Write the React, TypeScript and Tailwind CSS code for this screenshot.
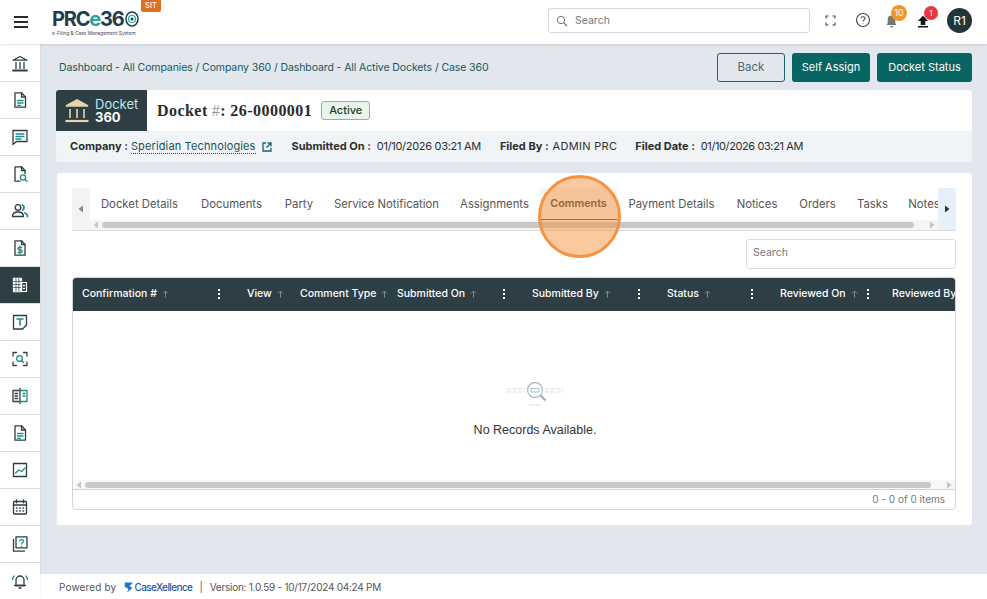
import React from "react";

const D = "#2d3e44";
const T = "#1c8f86";

function Ic({ children, size = 20 }: { children: React.ReactNode; size?: number }) {
  return (
    <svg width={size} height={size} viewBox="0 0 20 20" fill="none" stroke={D} strokeWidth="1.3" strokeLinecap="round" strokeLinejoin="round">
      {children}
    </svg>
  );
}

const sideIcons: React.ReactNode[] = [
  <Ic><path d="M3 7.2 10 3.5l7 3.7H3Z" /><path d="M6 9.5v6M10 9.5v6M14 9.5v6" /><path d="M3 17.5h14" strokeWidth="1.8" /></Ic>,
  <Ic><path d="M5 2.8h6.5L15.5 7v10.2H5Z" /><path d="M11.5 2.8V7h4" /><path d="M7.5 10.5h5.5M7.5 13h5.5" stroke={T} /><path d="M7.5 15.3h3" stroke={T} /></Ic>,
  <Ic><path d="M3 3.5h14v11H6.5L3 17.5Z" /><path d="M6 7h8M6 9.5h8M6 12h5" stroke={T} /></Ic>,
  <Ic><path d="M11.5 2.8H5v14.4h5" /><path d="M11.5 2.8 15 6.5v3" /><path d="M11.5 2.8v3.7H15" /><circle cx="13" cy="13.5" r="2.6" stroke={T} /><path d="m15 15.5 2 2" stroke={T} /></Ic>,
  <Ic><circle cx="8" cy="6.5" r="2.8" /><path d="M2.5 15.5c0-3 2.5-4.5 5.5-4.5s5.5 1.500 5.500 4.500Z" /><path d="M12.500 4c2 .8 2 4.200 0 5" stroke={T} strokeWidth="1.8" /><path d="M15 12c1.500.6 2.300 1.800 2.500 3.500" stroke={T} strokeWidth="1.8" /></Ic>,
  <Ic><path d="M5 2.800h6.500L15 6.500v10.700H5Z" /><path d="M11.500 2.800v3.700H15" /><path d="M11.800 9.300H9.200a1.300 1.300 0 0 0 0 2.600h1.600a1.300 1.300 0 0 1 0 2.600H8M10 8.200v7.400" stroke={T} /></Ic>,
  <Ic><rect x="3.500" y="3.500" width="8" height="13" fill="#fff" stroke="#fff" /><path d="M3.500 6.500h8M3.500 9.500h8M3.500 12.500h8M6 3.500v13M8.800 3.500v13" stroke={D} strokeWidth="0.700" /><path d="M11.500 7.500h5v9h-5Z" stroke="#fff" strokeWidth="1.200" /><path d="M13.500 10.500h1M13.500 13.500h1" stroke="#fff" /></Ic>,
  <Ic><path d="M3.500 3.500h13v9.500l-4 4h-9Z" /><path d="M7 7h6M10 7v6" stroke={T} strokeWidth="1.600" /></Ic>,
  <Ic><path d="M3 7V3.500h3.500M13.500 3.500H17V7M17 13v3.500h-3.500M6.500 16.500H3V13" /><circle cx="9.500" cy="9.500" r="2.800" stroke={T} /><path d="m11.500 11.500 2 2" stroke={T} /></Ic>,
  <Ic><path d="M9 4.500H3v11h6" /><path d="M11 4.500h6v11h-6" stroke={T} /><path d="M10 2.500v15" /><path d="M5 7.500h2.500M5 10h2.500M5 12.500h2.500" /><path d="M13 7.500h2M13 10h2" stroke={T} /></Ic>,
  <Ic><path d="M5 2.800h6.500L15.500 7v10.200H5Z" /><path d="M11.500 2.800V7h4" /><path d="M7.500 10.500h5.500M7.500 13h5.500M7.500 15.300h3" stroke={T} /></Ic>,
  <Ic><rect x="3.500" y="3.500" width="13" height="13" /><path d="m5.500 13 3.500-3 2.500 1.500 3.500-3.500" stroke={T} /></Ic>,
  <Ic><rect x="3.500" y="4.500" width="13" height="12.500" rx="1" /><path d="M3.500 8h13M6.500 2.800v3M13.500 2.800v3" /><path d="M6.500 11h.5M9.800 11h.5M13 11h.5M6.500 14h.5M9.800 14h.5M13 14h.5" strokeWidth="1.500" /></Ic>,
  <Ic><path d="M6 2.800h11v11H6Z" /><path d="M3.500 5.500v11.700h11" /><path d="M9.800 6.800c.3-1.600 3.700-1.600 3.700.4 0 1.500-2 1.500-2 3" stroke={T} /><path d="M11.500 12.300v.1" stroke={T} /></Ic>,
  <Ic><path d="M6 14.500V9a4 4 0 0 1 8 0v5.500Z" /><path d="M4.500 14.500h11M9 17h2" /><path d="M4 5c-1 1-1.500 2-1.500 3.500M16 5c1 1 1.500 2 1.500 3.500" stroke={T} /></Ic>,
];

const tabs = [
  ["Docket Details", "w-[99px]"],
  ["Documents", "w-[85px]"],
  ["Party", "w-[50px]"],
  ["Service Notification", "w-[125px]"],
  ["Assignments", "w-[91px]"],
  ["Comments", "w-[77px]"],
  ["Payment Details", "w-[109px]"],
  ["Notices", "w-[62px]"],
  ["Orders", "w-[59px]"],
  ["Tasks", "w-[51px]"],
  ["Notes", "w-[52px]"],
];

const cols: { label: string; w: string; kebab: boolean; pad: string }[] = [
  { label: "Confirmation #", w: "w-[164px]", kebab: true, pad: "pl-[9px] pr-[10px]" },
  { label: "View", w: "w-[53px]", kebab: false, pad: "px-[10px]" },
  { label: "Comment Type", w: "w-[97px]", kebab: false, pad: "px-[10px]" },
  { label: "Submitted On", w: "w-[135px]", kebab: true, pad: "px-[10px]" },
  { label: "Submitted By", w: "w-[135px]", kebab: true, pad: "px-[10px]" },
  { label: "Status", w: "w-[113px]", kebab: true, pad: "px-[10px]" },
  { label: "Reviewed On", w: "w-[112px]", kebab: true, pad: "pl-[10px] pr-[6px]" },
  { label: "Reviewed By", w: "w-[80px]", kebab: false, pad: "px-[10px]" },
];

function Kebab() {
  return (
    <span className="ml-auto flex w-4 flex-col items-center gap-[2px]">
      <span className="h-[2px] w-[2px] bg-white" />
      <span className="h-[2px] w-[2px] bg-white" />
      <span className="h-[2px] w-[2px] bg-white" />
    </span>
  );
}

function Arrow({ dir, color }: { dir: "l" | "r"; color: string }) {
  return (
    <svg width="6" height="8" viewBox="0 0 6 8" fill={color}>
      {dir === "l" ? <path d="M5 0.500v7L0.500 4Z" /> : <path d="M1 0.500v7L5.500 4Z" />}
    </svg>
  );
}

export default function App() {
  const sans = "font-['Inter',sans-serif]";
  return (
    <div className={`relative flex h-[599px] w-[987px] flex-col overflow-hidden bg-[#e2e7ed] text-[#333] ${sans}`}>
      {/* Top bar */}
      <header className="relative z-10 flex h-[44px] shrink-0 items-center bg-white pl-[14px] pr-[15px] shadow-[0_1px_2px_rgba(0,0,0,0.12)]">
        <div className="flex w-[14px] flex-col gap-[3px]">
          <span className="h-[2px] bg-[#2b2b2b]" />
          <span className="h-[2px] bg-[#2b2b2b]" />
          <span className="h-[2px] bg-[#2b2b2b]" />
        </div>
        <div className="ml-[25px] flex w-[88px] flex-col">
          <div className="-ml-[1px] flex h-[22px] items-center text-[20px] font-bold leading-[22px] tracking-[-1.200px] text-[#1f3d4a]">
            <span>PRC</span>
            <span className="text-[#2aa198]">e</span>
            <span>36</span>
            <svg className="ml-[1px]" width="14" height="16" viewBox="0 0 14 16" fill="none">
              <ellipse cx="7" cy="8" rx="6" ry="7" stroke="#1f3d4a" strokeWidth="1.500" />
              <circle cx="7" cy="8" r="3.500" stroke="#2aa198" strokeWidth="1.200" />
              <circle cx="7" cy="8" r="1.500" fill="#1f3d4a" />
            </svg>
          </div>
          <span className="-ml-[1px] whitespace-nowrap text-[4.800px] leading-[6px] text-[#445]">e-Filing &amp; Case Management System</span>
        </div>
        <div className="mb-[32px] flex h-[12px] w-[20px] items-center justify-center rounded-b-[2px] bg-[#e0701f] text-[7.500px] font-medium text-white">SIT</div>
        <div className="mb-[3px] ml-[387px] flex h-[25px] w-[262px] items-center rounded-[3px] border border-[#d5d7da] pl-[7px]">
          <svg width="12" height="12" viewBox="0 0 12 12" fill="none" stroke="#777" strokeWidth="1"><circle cx="5" cy="5" r="3.700" /><path d="m8 8 3 3" strokeWidth="1.400" /></svg>
          <span className="ml-[7px] text-[10.500px] text-[#777]">Search</span>
        </div>
        <svg className="mb-[4px] ml-[15px]" width="11" height="11" viewBox="0 0 11 11" fill="none" stroke="#444" strokeWidth="1.100"><path d="M1 3.500V1h2.500M7.500 1H10v2.500M10 7.500V10H7.500M3.500 10H1V7.500" /></svg>
        <svg className="mb-[4px] ml-[19px]" width="16" height="16" viewBox="0 0 16 16" fill="none" stroke="#444" strokeWidth="1.100"><circle cx="8" cy="8" r="6.500" /><path d="M6 6.300c.2-2 4-2 4 .1 0 1.500-2 1.400-2 3" /><path d="M8 11.200v.5" /></svg>
        <div className="relative mb-[4px] ml-[12px] h-[16px] w-[16px]">
          <svg className="absolute left-[3px] top-[3px]" width="11" height="13" viewBox="0 0 11 13" fill="#777"><path d="M5.500 0.500a3.800 3.800 0 0 0-3.800 3.800V8L0.500 10h10L9.300 8V4.300A3.800 3.800 0 0 0 5.500 0.500ZM4 11h3a1.500 1.500 0 0 1-3 0Z" /></svg>
          <span className="absolute left-[8px] top-[-7px] flex h-[16px] w-[16px] items-center justify-center rounded-full bg-[#f0962b] text-[9px] text-white">10</span>
        </div>
        <div className="relative mb-[4px] ml-[16px] h-[16px] w-[16px]">
          <svg className="absolute left-[2px] top-[3px]" width="12" height="13" viewBox="0 0 12 13" fill="#11171c"><path d="M6 0.500 11 6H8.300v4H3.700V6H1ZM1 11h10v1.500H1Z" /></svg>
          <span className="absolute left-[9px] top-[-6px] flex h-[14px] w-[14px] items-center justify-center rounded-full bg-[#e8383d] text-[8px] text-white">1</span>
        </div>
        <div className="mb-[3px] ml-auto flex h-[25px] w-[25px] items-center justify-center rounded-full bg-[#243539] text-[12px] text-white">R1</div>
      </header>

      <div className="flex min-h-0 flex-1">
        {/* Sidebar */}
        <aside className="relative z-[5] flex w-[40px] shrink-0 flex-col bg-white pt-[1px] shadow-[1px_0_2px_rgba(0,0,0,0.05)]">
          {sideIcons.map((ic, i) => (
            <div
              key={i}
              className={`flex h-[37px] shrink-0 items-center justify-center border-b border-[#dcdfe2] ${i === 6 ? "bg-[#2d3e44]" : "bg-white"}`}
            >
              {ic}
            </div>
          ))}
        </aside>

        <div className="flex min-w-0 flex-1 flex-col">
          <main className="flex flex-1 flex-col pl-[16px] pr-[15px] pt-[9px]">
            {/* Breadcrumb + actions */}
            <div className="flex h-[29px] items-center pl-[3px]">
              <span className="whitespace-nowrap text-[10.500px] tracking-[-0.100px] text-[#17585e]">
                Dashboard - All Companies / Company 360 / Dashboard - All Active Dockets / Case 360
              </span>
              <div className="ml-auto flex gap-[7px]">
                <button className="h-[29px] w-[68px] rounded-[3px] border border-[#17666a] pt-[1px] text-[11.500px] text-[#4d6a70]">Back</button>
                <button className="h-[29px] w-[78px] rounded-[3px] bg-[#076563] text-[11px] text-white">Self Assign</button>
                <button className="h-[29px] w-[95px] rounded-[3px] bg-[#076563] text-[11px] text-white">Docket Status</button>
              </div>
            </div>

            {/* Docket card */}
            <div className="mt-[8px] flex h-[41px] items-stretch rounded-t-[3px] bg-white">
              <div className="flex w-[91px] items-center rounded-tl-[3px] bg-[#2d3e44] pl-[8px]">
                <svg width="26" height="25" viewBox="0 0 26 25" fill="none" stroke="#e8d6a8" strokeWidth="1.600">
                  <path d="M2 8 13 2l11 6Z" fill="#e8d6a8" />
                  <path d="M6 11v9M13 11v9M20 11v9" />
                  <path d="M1.500 23h23" strokeWidth="2.200" />
                </svg>
                <div className="ml-[5px] flex flex-col text-[13px] leading-[13px]">
                  <span className="text-[#bfe6ea]">Docket</span>
                  <span className="font-bold text-white">360</span>
                </div>
              </div>
              <div className="ml-[10px] flex items-center whitespace-nowrap font-['Liberation_Serif',serif] text-[16px] font-bold tracking-[0.450px] text-[#2b2b2b]">
                <span>Docket</span>
                <span className="ml-[4px] font-normal text-[#9a9a9a]">#</span>
                <span>: 26-0000001</span>
              </div>
              <div className="ml-[9px] mt-[11px] flex h-[19px] w-[49px] items-center justify-center rounded-[3px] border border-[#7dbf8d] bg-[#e8f5ea] text-[11px] font-medium text-[#2b3b2b]">
                Active
              </div>
            </div>

            {/* Meta row */}
            <div className="flex h-[31px] items-center rounded-b-[3px] bg-[#f1f4f6] pl-[14px] text-[11px] text-[#2e2e2e]">
              <span className="font-bold">Company :</span>
              <span className="ml-[3px] border-b border-dotted border-[#17535a] leading-[13px] tracking-[0.130px] text-[#17535a]">Speridian Technologies</span>
              <svg className="ml-[6px]" width="10" height="10" viewBox="0 0 10 10" fill="none" stroke="#17666a" strokeWidth="1.300"><path d="M4 1H1v8h8V6M5.500 1H9v3.500M9 1 4.500 5.500" /></svg>
              <span className="ml-[20px] font-bold">Submitted On :</span>
              <span className="ml-[6px] tracking-[-0.300px]">01/10/2026 03:21 AM</span>
              <span className="ml-[19px] font-bold">Filed By :</span>
              <span className="ml-[4px] tracking-[0.300px]">ADMIN PRC</span>
              <span className="ml-[18px] font-bold">Filed Date :</span>
              <span className="ml-[6px] tracking-[-0.400px]">01/10/2026 03:21 AM</span>
            </div>

            {/* Content card */}
            <div className="ml-[1px] mt-[11px] flex h-[352px] flex-col rounded-[3px] bg-white pb-[15px] pl-[15px] pr-[16px] pt-[15px]">
              {/* Tabs */}
              <div className="relative flex h-[43px] shrink-0 border-b border-[#dcdcdc]">
                <div className="flex w-[18px] shrink-0 items-center justify-center rounded-tl-[3px] bg-[#f3f3f3]">
                  <Arrow dir="l" color="#888" />
                </div>
                <div className="relative min-w-0 flex-1 overflow-hidden">
                  <div className="flex h-[32px]">
                    {tabs.map(([t, w]) => (
                      <div
                        key={t}
                        className={`flex shrink-0 items-center justify-center whitespace-nowrap pt-[1px] ${w} ${t === "Comments" ? "border-b border-[#444] bg-[#f5f5f5] text-[10.800px] font-semibold text-[#333]" : "text-[11.300px] text-[#555]"}`}
                      >
                        {t}
                      </div>
                    ))}
                  </div>
                  <div className="flex h-[10px] items-center bg-[#f5f5f5] px-[3px]">
                    <Arrow dir="l" color="#c4c4c4" />
                    <div className="ml-[3px] h-[6px] flex-1 rounded-full bg-[#c8c8c8]" />
                    <div className="ml-[15px]"><Arrow dir="r" color="#c4c4c4" /></div>
                  </div>
                </div>
                <div className="flex w-[18px] shrink-0 items-center justify-center rounded-tr-[3px] bg-[#e6f0fa]">
                  <Arrow dir="r" color="#333" />
                </div>
              </div>

              {/* Search */}
              <div className="mt-[8px] flex h-[30px] w-[210px] shrink-0 items-center self-end rounded-[3px] border border-[#dedede] pb-[2px] pl-[6px] text-[10.500px] text-[#777]">
                Search
              </div>

              {/* Table */}
              <div className="mt-[8px] flex min-h-0 flex-1 flex-col overflow-hidden rounded-[4px] border border-[#d4d4d4]">
                <div className="flex h-[33px] shrink-0 items-center overflow-hidden bg-[#2d3e44] pb-[2px] text-[10.500px] font-medium text-white">
                  {cols.map((c) => (
                    <div key={c.label} className={`flex shrink-0 items-center whitespace-nowrap ${c.w} ${c.pad}`}>
                      <span>{c.label}</span>
                      {c.label !== "Reviewed By" && (
                        <svg className="ml-[5px] shrink-0" width="7" height="8" viewBox="0 0 7 8" fill="none" stroke="#7d8c91" strokeWidth="1"><path d="M3.500 7.500V1M1 3.500l2.500-2.500L6 3.500" /></svg>
                      )}
                      {c.kebab && <Kebab />}
                    </div>
                  ))}
                </div>
                <div className="flex flex-1 flex-col items-center pl-[42px] pt-[67px]">
                  <svg width="60" height="30" viewBox="0 0 60 30" fill="none">
                    <path d="M2 11h18M2 14h18M40 11h18M40 14h18" stroke="#e8eef3" strokeWidth="2" strokeDasharray="4 1.500" />
                    <circle cx="30" cy="12" r="7.500" stroke="#a9bdc9" strokeWidth="1.300" fill="#fff" />
                    <path d="M26 10.500h8v3.500h-8Z" stroke="#9cc4db" strokeWidth="1" />
                    <path d="m35.500 17.500 5 5" stroke="#9aa8b0" strokeWidth="2" />
                    <path d="M24 27h12" stroke="#e0e0e0" strokeWidth="1" />
                  </svg>
                  <span className="mt-[14px] font-['Liberation_Sans',sans-serif] text-[12.500px] leading-[16px] text-[#333]">No Records Available.</span>
                </div>
                <div className="flex h-[9px] shrink-0 items-center bg-[#f7f7f7] px-[3px]">
                  <Arrow dir="l" color="#c4c4c4" />
                  <div className="ml-[3px] h-[6px] flex-1 rounded-full bg-[#c8c8c8]" />
                  <div className="ml-[15px]"><Arrow dir="r" color="#c4c4c4" /></div>
                </div>
                <div className="flex h-[20px] shrink-0 items-center justify-end border-t border-[#d4d4d4] pb-[1px] pr-[10px] text-[10px] text-[#777]">
                  0 - 0 of 0 items
                </div>
              </div>
            </div>
          </main>

          {/* Footer */}
          <footer className="flex h-[25px] shrink-0 items-center bg-white pl-[19px] pt-[1px] text-[10px] text-[#555]">
            <span className="tracking-[0.150px]">Powered by</span>
            <svg className="ml-[8px]" width="9" height="11" viewBox="0 0 9 11" fill="#1b77c9"><path d="M1 0.500h8L5.500 4l3 2L3 10.500 4.500 7 0.500 4.500Z" /></svg>
            <span className="ml-[1px] font-medium tracking-[-0.600px] text-[#2a58a8]">CaseXellence</span>
            <span className="ml-[7px]">|</span>
            <span className="ml-[7px] tracking-[-0.250px]">Version: 1.0.59 - 10/17/2024 04:24 PM</span>
          </footer>
        </div>
      </div>

      {/* Click highlight overlay */}
      <div className="pointer-events-none absolute left-[538px] top-[175px] z-20 h-[83px] w-[83px] rounded-full border-[3px] border-[#f59342] bg-[#f59342]/50" />
    </div>
  );
}
